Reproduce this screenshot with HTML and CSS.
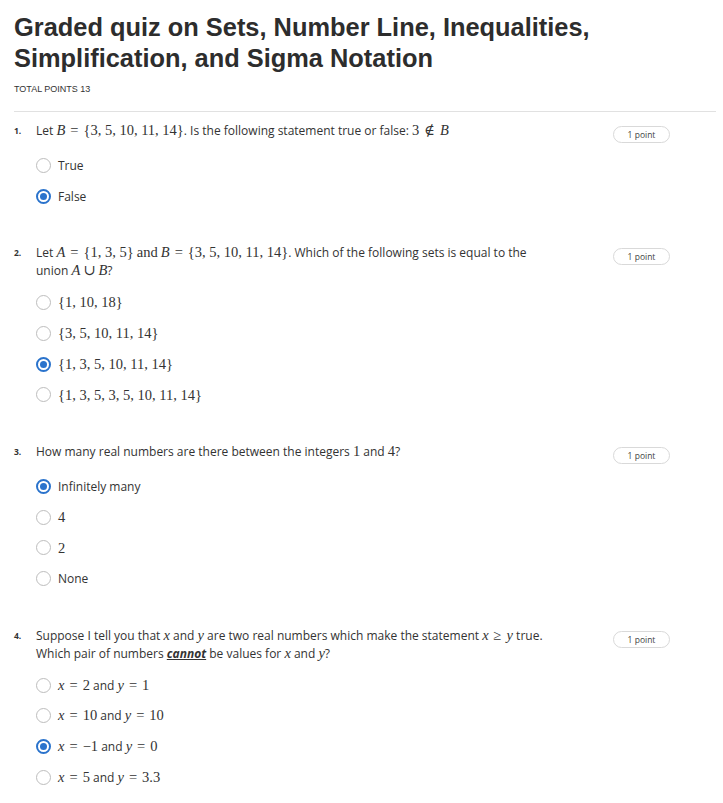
FILE: index.html
```html
<!DOCTYPE html>
<html>
<head>
<meta charset="utf-8">
<link rel="stylesheet" href="styles.css">
</head>
<body>
<div class="page">
  <h1 class="title">Graded quiz on Sets, Number Line, Inequalities, Simplification, and Sigma Notation</h1>
  <div class="total">TOTAL POINTS 13</div>
  <div class="rule"></div>

  <div class="question">
    <div class="qhead">
      <div class="num">1.</div>
      <div class="qtext">Let <span class="m"><i>B</i><span class="rel">=</span>{3, 5, 10, 11, 14}</span>. Is the following statement true or false: <span class="m">3<span class="rel">∉</span><i>B</i></span></div>
      <div class="pill">1 point</div>
    </div>
    <div class="options">
      <div class="opt"><span class="radio"></span><span class="otext">True</span></div>
      <div class="opt"><span class="radio on"></span><span class="otext">False</span></div>
    </div>
  </div>

  <div class="question">
    <div class="qhead">
      <div class="num">2.</div>
      <div class="qtext">Let <span class="m"><i>A</i><span class="rel">=</span>{1, 3, 5}</span> <span class="m">and</span> <span class="m"><i>B</i><span class="rel">=</span>{3, 5, 10, 11, 14}</span>. Which of the following sets is equal to the union <span class="m"><i>A</i><span class="bin">∪</span><i>B</i></span>?</div>
      <div class="pill">1 point</div>
    </div>
    <div class="options">
      <div class="opt"><span class="radio"></span><span class="mtext">{1, 10, 18}</span></div>
      <div class="opt"><span class="radio"></span><span class="mtext">{3, 5, 10, 11, 14}</span></div>
      <div class="opt"><span class="radio on"></span><span class="mtext">{1, 3, 5, 10, 11, 14}</span></div>
      <div class="opt"><span class="radio"></span><span class="mtext">{1, 3, 5, 3, 5, 10, 11, 14}</span></div>
    </div>
  </div>

  <div class="question">
    <div class="qhead">
      <div class="num">3.</div>
      <div class="qtext">How many real numbers are there between the integers <span class="m">1</span> and <span class="m">4</span>?</div>
      <div class="pill">1 point</div>
    </div>
    <div class="options">
      <div class="opt"><span class="radio on"></span><span class="otext">Infinitely many</span></div>
      <div class="opt"><span class="radio"></span><span class="mtext">4</span></div>
      <div class="opt"><span class="radio"></span><span class="mtext">2</span></div>
      <div class="opt"><span class="radio"></span><span class="otext">None</span></div>
    </div>
  </div>

  <div class="question">
    <div class="qhead">
      <div class="num">4.</div>
      <div class="qtext">Suppose I tell you that <span class="m"><i>x</i></span> and <span class="m"><i>y</i></span> are two real numbers which make the statement <span class="m"><i>x</i><span class="rel">≥</span><i>y</i></span> true. Which pair of numbers <b class="em"><i>cannot</i></b> be values for <span class="m"><i>x</i></span> and <span class="m"><i>y</i></span>?</div>
      <div class="pill">1 point</div>
    </div>
    <div class="options">
      <div class="opt"><span class="radio"></span><span class="otext"><span class="m"><i>x</i><span class="rel">=</span>2</span> and <span class="m"><i>y</i><span class="rel">=</span>1</span></span></div>
      <div class="opt"><span class="radio"></span><span class="otext"><span class="m"><i>x</i><span class="rel">=</span>10</span> and <span class="m"><i>y</i><span class="rel">=</span>10</span></span></div>
      <div class="opt"><span class="radio on"></span><span class="otext"><span class="m"><i>x</i><span class="rel">=</span>−1</span> and <span class="m"><i>y</i><span class="rel">=</span>0</span></span></div>
      <div class="opt"><span class="radio"></span><span class="otext"><span class="m"><i>x</i><span class="rel">=</span>5</span> and <span class="m"><i>y</i><span class="rel">=</span>3.3</span></span></div>
    </div>
  </div>
</div>
</body>
</html>
```

FILE: styles.css
```css
* { box-sizing: border-box; }
html, body { margin: 0; padding: 0; background: #fff; }
body { font-family: "Open Sans", "Liberation Sans", sans-serif; color: #333; }
.page { padding: 12px 7px 0 14px; }
.title {
  margin: 0;
  font-family: "Liberation Sans", Arial, sans-serif;
  font-weight: 700;
  font-size: 25.4px;
  line-height: 31px;
  color: #2d2d2d;
  width: 600px;
}
.total {
  margin-top: 10px;
  font-family: "Liberation Sans", Arial, sans-serif;
  font-size: 9px;
  line-height: 10px;
  color: #333;
}
.rule { margin-top: 17px; height: 1px; background: #e1e1e1; }
.question { margin-top: 10px; padding-right: 46px; }
.question + .question { margin-top: 33px; }
.qhead { display: flex; align-items: flex-start; }
.num {
  width: 22px;
  flex: none;
  font-size: 8.5px;
  font-weight: 700;
  line-height: 18px;
  color: #333;
}
.qtext {
  width: 521px;
  flex: none;
  font-size: 12px;
  line-height: 18px;
  color: #333;
}
.pill {
  margin-left: auto;
  margin-top: 4px;
  width: 57px;
  height: 17px;
  border: 1px solid #d9d9d9;
  border-radius: 9px;
  font-size: 8.5px;
  line-height: 15px;
  text-align: center;
  color: #444;
}
.m, .mtext {
  font-family: "Liberation Serif", "DejaVu Serif", serif;
  font-size: 14.5px;
  line-height: 1;
  color: #333;
  font-style: normal;
}
.m i, .mtext i {
  font-family: "Liberation Serif", "DejaVu Serif", serif;
  font-style: italic;
}
.rel { padding: 0 5px; }
.bin { padding: 0 3px; }
.em { font-weight: 700; text-decoration: underline; }
.em i { font-family: "Open Sans", sans-serif; font-style: italic; }
.options { margin-top: 7px; padding-left: 22px; display: flex; flex-direction: column; }
.opt { height: 30.7px; display: flex; align-items: center; }
.radio {
  flex: none;
  width: 15px;
  height: 15px;
  border: 1.5px solid #bdbdbd;
  border-radius: 50%;
  margin-right: 7px;
  display: flex;
  align-items: center;
  justify-content: center;
}
.radio.on { border: 2px solid #2a73cc; }
.radio.on::after {
  content: "";
  width: 7px;
  height: 7px;
  border-radius: 50%;
  background: #2a73cc;
}
.otext { font-size: 12px; color: #333; }
```
